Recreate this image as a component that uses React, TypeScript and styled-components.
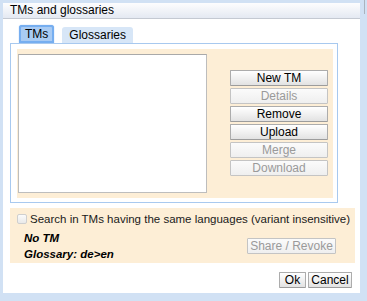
import React from 'react';
import styled, { createGlobalStyle } from 'styled-components';

const GlobalStyle = createGlobalStyle`
  html, body {
    margin: 0;
    padding: 0;
    background: #d1e1f4;
  }
  body {
    font-family: "Liberation Sans", Arial, Helvetica, sans-serif;
    font-size: 12px;
    color: #000;
  }
`;

const Frame = styled.div`
  width: 367px;
  height: 301px;
  box-sizing: border-box;
  padding: 3px 7px 8px 3px;
  position: relative;
`;

const Notch = styled.div`
  position: absolute;
  right: 2px;
  top: 0;
  width: 1px;
  height: 14px;
  background: #aab3be;
`;

const Dialog = styled.div`
  width: 357px;
  height: 290px;
  background: #fff;
  display: flex;
  flex-direction: column;
`;

const TitleBar = styled.div`
  height: 15px;
  line-height: 15px;
  padding-left: 7px;
  background: linear-gradient(#fdfdfe, #e4e9f2);
  border-bottom: 1px solid #c4c9d2;
  font-size: 12px;
`;

const Body = styled.div`
  flex: 1;
  display: flex;
  flex-direction: column;
  padding: 7px 5px 0 7px;
`;

const TabRow = styled.div`
  display: flex;
  align-items: flex-end;
  gap: 8px;
  margin-left: 9px;
  height: 17px;
`;

const Tab = styled.div<{ $active?: boolean }>`
  box-sizing: border-box;
  height: ${p => (p.$active ? '18px' : '16px')};
  padding: 0 ${p => (p.$active ? '4px' : '7px')};
  line-height: ${p => (p.$active ? '15px' : '16px')};
  font-size: 12px;
  border-radius: 3px 3px 0 0;
  background: ${p => (p.$active ? '#a9cbf3' : '#d7e6f7')};
  border: ${p => (p.$active ? '2px solid #76aef0' : 'none')};
  box-shadow: ${p => (p.$active ? '0 0 1px #5b9be6' : 'none')};
`;

const Panel = styled.div`
  width: 328px;
  box-sizing: border-box;
  border: 1px solid #a8c9ef;
  padding: 5px 4px 4px 6px;
`;

const PanelInner = styled.div`
  display: flex;
  align-items: flex-start;
  background: #fdeed6;
  padding: 5px 4px 5px 1px;
`;

const ListBox = styled.div`
  width: 189px;
  height: 139px;
  box-sizing: border-box;
  background: #fff;
  border: 1px solid #bdbdbd;
  border-top-color: #a9a9a9;
`;

const ButtonColumn = styled.div`
  display: flex;
  flex-direction: column;
  gap: 2px;
  margin: 16px 0 0 23px;
`;

const Button = styled.button<{ $width?: number }>`
  box-sizing: border-box;
  width: ${p => (p.$width ? `${p.$width}px` : 'auto')};
  height: 16px;
  padding: 0;
  margin: 0;
  white-space: nowrap;
  font-family: "Liberation Sans", Arial, Helvetica, sans-serif;
  font-size: 12px;
  line-height: 14px;
  color: #000;
  background: linear-gradient(#ffffff, #f1f1f1 50%, #e2e2e2);
  border: 1px solid #acacac;
  border-bottom-color: #9c9c9c;
  border-radius: 1px;
  &:disabled {
    color: #9a9a9a;
    border-color: #c4c4c4;
    background: linear-gradient(#fbfbfb, #efefef);
  }
`;

const OptionsBox = styled.div`
  margin-top: 5px;
  width: 345px;
  height: 55px;
  box-sizing: border-box;
  background: #fdeed6;
  padding: 5px 0 0 7px;
  display: flex;
  flex-direction: column;
`;

const CheckRow = styled.label`
  display: flex;
  align-items: center;
  gap: 3px;
  height: 12px;
  font-size: 11.5px;
  white-space: nowrap;
  color: #1a1a1a;
`;

const Checkbox = styled.span`
  flex: none;
  width: 8px;
  height: 8px;
  border: 1px solid #cfcfcf;
  border-radius: 2px;
  background: linear-gradient(#fbfbfb, #e9e9e9);
`;

const StatusRow = styled.div`
  display: flex;
  justify-content: space-between;
  align-items: flex-start;
  padding: 5px 19px 0 7px;
`;

const StatusText = styled.div`
  font-weight: bold;
  font-style: italic;
  font-size: 11.5px;
  line-height: 16px;
`;

const ShareButton = styled(Button)`
  margin-top: 8px;
`;

const Footer = styled.div`
  display: flex;
  justify-content: flex-end;
  gap: 2px;
  padding: 9px 3px 0 0;
`;

const App: React.FC = () => {
  const tmButtons = [
    { label: 'New TM', disabled: false },
    { label: 'Details', disabled: true },
    { label: 'Remove', disabled: false },
    { label: 'Upload', disabled: false },
    { label: 'Merge', disabled: true },
    { label: 'Download', disabled: true },
  ];

  return (
    <Frame>
      <GlobalStyle />
      <Notch />
      <Dialog>
        <TitleBar>TMs and glossaries</TitleBar>
        <Body>
          <TabRow>
            <Tab $active>TMs</Tab>
            <Tab>Glossaries</Tab>
          </TabRow>
          <Panel>
            <PanelInner>
              <ListBox />
              <ButtonColumn>
                {tmButtons.map(b => (
                  <Button key={b.label} $width={98} disabled={b.disabled}>
                    {b.label}
                  </Button>
                ))}
              </ButtonColumn>
            </PanelInner>
          </Panel>
          <OptionsBox>
            <CheckRow>
              <Checkbox />
              Search in TMs having the same languages (variant insensitive)
            </CheckRow>
            <StatusRow>
              <StatusText>
                <div>No TM</div>
                <div>Glossary: de&gt;en</div>
              </StatusText>
              <ShareButton $width={89} disabled>Share / Revoke</ShareButton>
            </StatusRow>
          </OptionsBox>
          <Footer>
            <Button $width={27}>Ok</Button>
            <Button $width={44}>Cancel</Button>
          </Footer>
        </Body>
      </Dialog>
    </Frame>
  );
};

export default App;
